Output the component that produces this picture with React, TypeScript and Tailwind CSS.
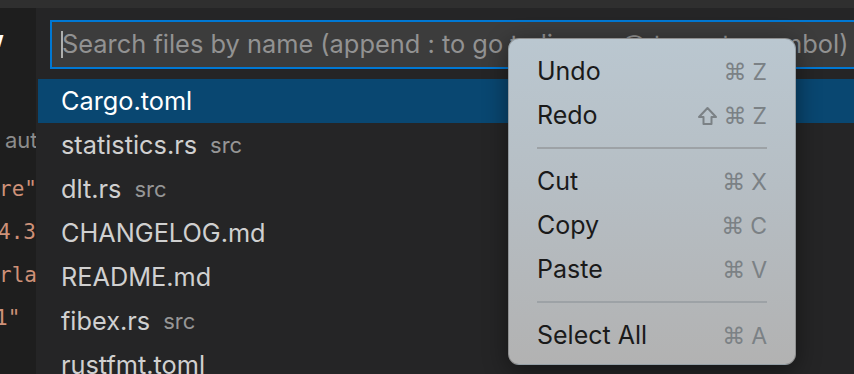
import React from "react";

const files: { name: string; desc?: string }[] = [
  { name: "Cargo.toml" },
  { name: "statistics.rs", desc: "src" },
  { name: "dlt.rs", desc: "src" },
  { name: "CHANGELOG.md" },
  { name: "README.md" },
  { name: "fibex.rs", desc: "src" },
  { name: "rustfmt.toml" },
];

type MenuEntry = { label: string; keys: string } | "sep";

const menu: MenuEntry[] = [
  { label: "Undo", keys: "⌘Z" },
  { label: "Redo", keys: "⇧⌘Z" },
  "sep",
  { label: "Cut", keys: "⌘X" },
  { label: "Copy", keys: "⌘C" },
  { label: "Paste", keys: "⌘V" },
  "sep",
  { label: "Select All", keys: "⌘A" },
];

function ShiftIcon() {
  return (
    <svg width="21" height="20" viewBox="0 0 21 20" fill="none" stroke="currentColor" strokeWidth="2" strokeLinejoin="round">
      <path d="M10.5 2 L19 11 H14.5 V18 H6.5 V11 H2 Z" />
    </svg>
  );
}

function Shortcut({ keys }: { keys: string }) {
  const chars = Array.from(keys);
  return (
    <span className="flex items-center gap-[6px] text-[#7b8185]">
      {chars.map((c, i) =>
        c === "⇧" ? (
          <ShiftIcon key={i} />
        ) : c === "⌘" ? (
          <span key={i} className="text-[23px] leading-none" style={{ fontFamily: '"DejaVu Sans", sans-serif' }}>
            {c}
          </span>
        ) : (
          <span key={i} className="text-[23px] leading-none">
            {c}
          </span>
        )
      )}
    </span>
  );
}

export default function App() {
  return (
    <div
      className="relative w-[854px] h-[374px] overflow-hidden bg-[#252526] flex flex-col"
      style={{ fontFamily: 'Inter, "Noto Sans", sans-serif' }}
    >
      <div className="h-[8px] shrink-0 bg-[#2f2f2f]" />
      <div className="flex flex-1 min-h-0">
        {/* editor strip */}
        <div className="w-[36px] shrink-0 bg-[#1e1e1e] overflow-hidden pt-[10px]">
          <div className="h-[43px] leading-[43px] text-[22px] text-white font-bold whitespace-pre ml-[-15px]">w</div>
          <div className="h-[58px]" />
          <div className="h-[43px] leading-[43px] text-[22px] text-[#8c8c8c] whitespace-pre ml-[5px]">aut</div>
          <div className="h-[6px]" />
          <div
            className="text-[21px] text-[#ce9178] whitespace-pre"
            style={{ fontFamily: '"DejaVu Sans Mono", monospace' }}
          >
            <div className="h-[43px] leading-[43px] ml-[-1px]">re"</div>
            <div className="h-[43px] leading-[43px] ml-[-2px]">4.3</div>
            <div className="h-[43px] leading-[43px] ml-[-1px]">rla</div>
            <div className="h-[43px] leading-[43px] ml-[-5px]">1"</div>
          </div>
        </div>
        {/* quick pick */}
        <div className="flex-1 min-w-0 pt-[12px] pl-[2px]">
          <div className="ml-[12px] mr-[-40px] h-[49px] border-2 border-[#0078d4] bg-[#3c3c3c] flex items-center pl-[9px]">
            <div className="w-[2px] h-[27px] bg-[#aeafad]" />
            <span className="text-[25.4px] text-[#929292] whitespace-nowrap ml-[-1px]">
              Search files by name (append : to go to line or @ to go to symbol)
            </span>
          </div>
          <div className="mt-[10px]">
            {files.map((f, i) => (
              <div
                key={f.name}
                className={
                  "h-[44px] flex items-center pl-[23px] whitespace-nowrap " +
                  (i === 0 ? "bg-[#094771] text-white" : "text-[#d0d0d0]")
                }
              >
                <span className="text-[25.3px]">{f.name}</span>
                {f.desc && <span className="ml-[13px] text-[22px] text-[#969696]">{f.desc}</span>}
              </div>
            ))}
          </div>
        </div>
      </div>

      {/* context menu */}
      <div
        className="absolute left-[508px] top-[38px] w-[288px] h-[327px] rounded-[11px] pt-[11px] shadow-[0_6px_24px_rgba(0,0,0,0.45)] border border-[#00000033]"
        style={{ background: "linear-gradient(180deg, #bac7d0 0%, #b6bec4 45%, #b2b2b2 100%)" }}
      >
        {menu.map((m, i) =>
          m === "sep" ? (
            <div key={i} className="h-[22px] pt-[9px] px-[28px]">
              <div className="h-[2px] bg-[#9da2a6]" />
            </div>
          ) : (
            <div key={i} className="h-[44px] flex items-center justify-between pl-[28px] pr-[28px]">
              <span className="text-[25px] text-[#1a1a1a]">{m.label}</span>
              <Shortcut keys={m.keys} />
            </div>
          )
        )}
      </div>
    </div>
  );
}
